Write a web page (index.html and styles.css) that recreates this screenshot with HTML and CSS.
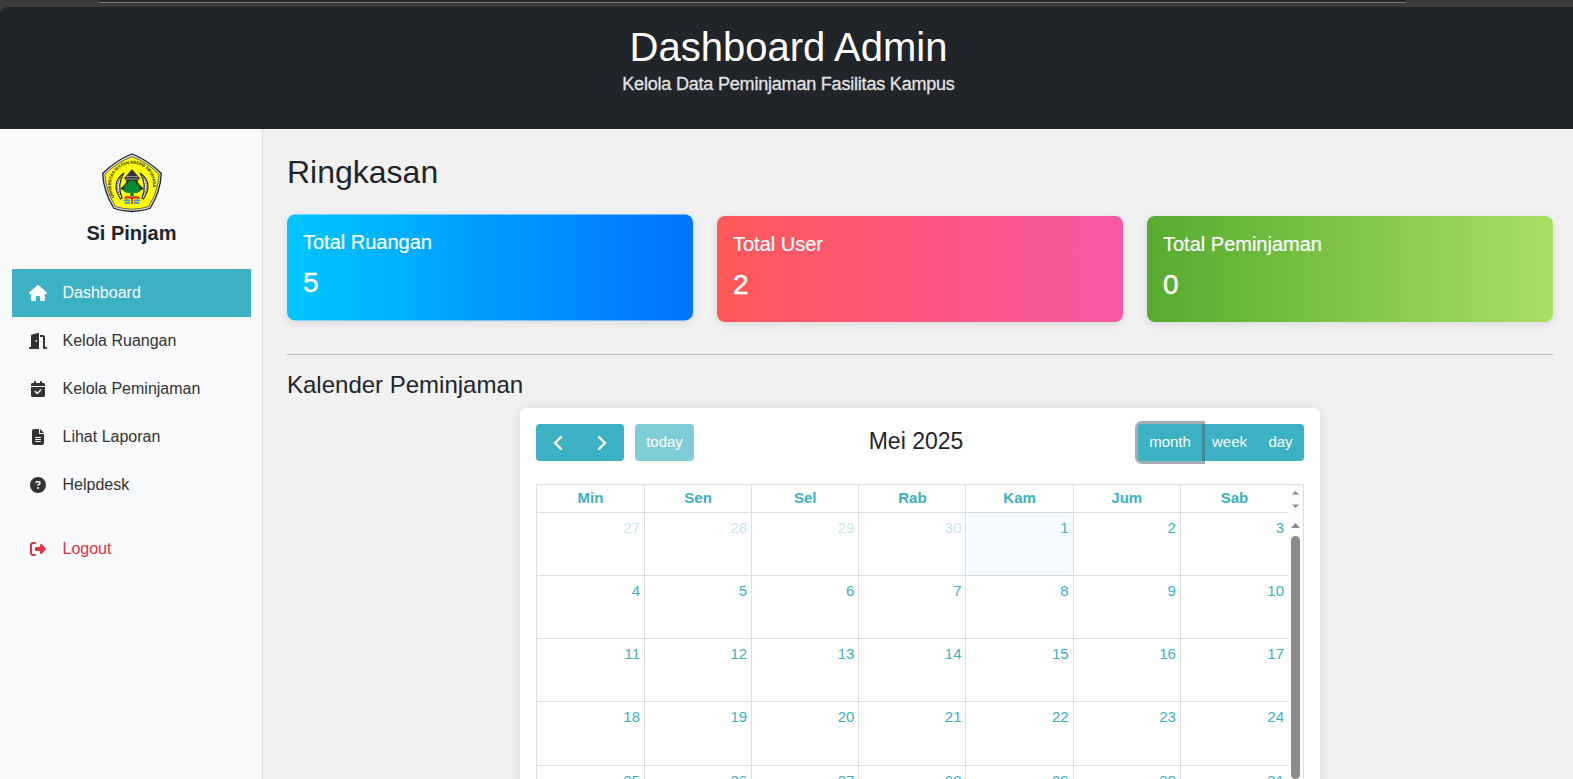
FILE: index.html
```html
<!DOCTYPE html>
<html lang="id">
<head>
<meta charset="utf-8">
<title>Dashboard Admin</title>
<link rel="stylesheet" href="styles.css">
</head>
<body>
<div class="chrome"><div class="address"></div></div>
<header class="header">
  <h1>Dashboard Admin</h1>
  <p>Kelola Data Peminjaman Fasilitas Kampus</p>
</header>
<div class="layout">
  <aside class="sidebar">
    <svg class="logo" viewBox="0 0 60 60">
      <path d="M30 1 Q46 7 59.300 20.500 Q58.500 39 48 55.500 Q30 61.500 12 55.500 Q1.500 39 .7 20.500 Q14 7 30 1Z" fill="#d8d8d8" stroke="#222" stroke-width="1.300"/>
      <path d="M30 3.800 Q45 9 57 21.500 Q56 38.500 46.500 53.500 Q30 58.800 13.500 53.500 Q4 38.500 3 21.500 Q15 9 30 3.800Z" fill="#ffff05" stroke="#333" stroke-width=".7"/>
      <path id="arc" d="M12.500 44 A21 21.500 0 1 1 47.500 44" fill="none"/>
      <text class="logo-text"><textPath href="#arc" textLength="81">UNIVERSITAS SULTAN AGENG TIRTAYASA</textPath></text>
      <path d="M22 20 Q8 30 18.500 46 L20 45 Q14.500 32 22 20ZM38 20 Q52 30 41.500 46 L40 45 Q45.500 32 38 20Z" fill="#e4e4e4" stroke="#222" stroke-width="1.100"/>
      <path d="M19 24 Q12.500 33 18 42M41 24 Q47.500 33 42 42" fill="none" stroke="#444" stroke-width=".8" stroke-dasharray="2 1"/>
      <path d="M30 16 L35 22 L38 25 L35.500 28 L37 31 L42 36 L37 38 H23 L18 36 L23 31 L24.500 28 L22 25 L25 22Z" fill="#333"/>
      <path d="M24 23.500H36M24 26H36" stroke="#aaa" stroke-width=".8"/>
      <path d="M30 27.500 Q34 27 34.500 31 Q38.500 32 37.500 35 Q40 38 36 39.500 Q33.500 40.500 31.500 39.500 L32 43.500 H28 L28.500 39.500 Q26.500 40.500 24 39.500 Q20 38 22.500 35 Q21.500 32 25.500 31 Q26 27 30 27.500Z" fill="#078a34"/>
      <path d="M22.500 45 Q26 43.500 30 45 Q34 43.500 37.500 45" fill="none" stroke="#e3231b" stroke-width="2"/>
      <path d="M22 47.800 Q25 46.500 28 47.800M32 47.800 Q35 46.500 38 47.800M23 50.300 Q26 49 28 50.300M32 50.300 Q35 49 37 50.300" fill="none" stroke="#269ad0" stroke-width="1.600"/>
      <path d="M30 46V51" stroke="#e3231b" stroke-width="1.700"/>
    </svg>
    <div class="brand">Si Pinjam</div>
    <nav class="menu">
      <a class="item active"><svg class="icon" viewBox="0 0 576 512" width="18"><path d="M575.8 255.500c0 18-15 32.100-32 32.100h-32l.7 160.200c0 2.700-.2 5.400-.5 8.100V472c0 22.100-17.900 40-40 40H456c-1.100 0-2.200 0-3.300-.1c-1.400 .1-2.800 .1-4.200 .1H416 392c-22.100 0-40-17.900-40-40V448 384c0-17.700-14.300-32-32-32H256c-17.700 0-32 14.300-32 32v64 24c0 22.100-17.900 40-40 40H160 128.100c-1.500 0-3-.1-4.500-.2c-1.200 .1-2.400 .2-3.600 .2H104c-22.100 0-40-17.900-40-40V360c0-.9 0-1.900 .1-2.800V287.600H32c-18 0-32-14-32-32.100c0-9 3-17 10-24L266.400 8c7-7 15-8 22-8s15 2 21 7L564.800 231.500c8 7 12 15 11 24z"/></svg><span>Dashboard</span></a>
      <a class="item"><svg class="icon" viewBox="0 0 576 512" width="18"><path d="M320 32c0-9.900-4.500-19.200-12.300-25.200S289.800-1.400 280.200 1l-179.900 45C79 51.300 64 70.500 64 92.500V448H32c-17.700 0-32 14.300-32 32s14.300 32 32 32H96 288h32V480 32zM256 256c0 17.700-10.700 32-24 32s-24-14.300-24-32s10.700-32 24-32s24 14.300 24 32zm96-128h96V480c0 17.700 14.300 32 32 32h64c17.700 0 32-14.300 32-32s-14.300-32-32-32H512V128c0-35.300-28.700-64-64-64H352v64z"/></svg><span>Kelola Ruangan</span></a>
      <a class="item"><svg class="icon" viewBox="0 0 448 512" width="14"><path d="M128 0c17.700 0 32 14.300 32 32V64H288V32c0-17.700 14.300-32 32-32s32 14.300 32 32V64h48c26.500 0 48 21.500 48 48v48H0V112C0 85.500 21.500 64 48 64H96V32c0-17.700 14.300-32 32-32zM0 192H448V464c0 26.500-21.500 48-48 48H48c-26.500 0-48-21.500-48-48V192zM329 305c9.400-9.400 9.400-24.600 0-33.900s-24.600-9.400-33.900 0l-95 95-47-47c-9.400-9.400-24.600-9.400-33.900 0s-9.400 24.600 0 33.900l64 64c9.400 9.400 24.600 9.400 33.900 0L329 305z"/></svg><span>Kelola Peminjaman</span></a>
      <a class="item"><svg class="icon" viewBox="0 0 384 512" width="12"><path d="M64 0C28.700 0 0 28.700 0 64V448c0 35.300 28.700 64 64 64H320c35.300 0 64-28.700 64-64V160H256c-17.700 0-32-14.300-32-32V0H64zM256 0V128H384L256 0zM112 256H272c8.800 0 16 7.200 16 16s-7.200 16-16 16H112c-8.800 0-16-7.200-16-16s7.200-16 16-16zm0 64H272c8.800 0 16 7.200 16 16s-7.200 16-16 16H112c-8.800 0-16-7.200-16-16s7.200-16 16-16zm0 64H272c8.800 0 16 7.200 16 16s-7.200 16-16 16H112c-8.800 0-16-7.200-16-16s7.200-16 16-16z"/></svg><span>Lihat Laporan</span></a>
      <a class="item"><svg class="icon" viewBox="0 0 512 512" width="16"><path d="M256 512A256 256 0 1 0 256 0a256 256 0 1 0 0 512zM169.800 165.300c7.900-22.300 29.100-37.300 52.800-37.300h58.300c34.900 0 63.100 28.300 63.100 63.100c0 22.600-12.100 43.500-31.700 54.800L280 264.400c-.2 13-10.900 23.600-24 23.600c-13.300 0-24-10.700-24-24V250.500c0-8.600 4.600-16.500 12.100-20.800l44.300-25.400c4.700-2.700 7.600-7.700 7.600-13.100c0-8.400-6.800-15.100-15.100-15.100H222.600c-3.400 0-6.400 2.100-7.500 5.300l-.4 1.200c-4.400 12.500-18.200 19-30.600 14.600s-19-18.200-14.600-30.600l.4-1.200zM224 352a32 32 0 1 1 64 0 32 32 0 1 1-64 0z"/></svg><span>Helpdesk</span></a>
      <a class="item logout"><svg class="icon" viewBox="0 0 512 512" width="16"><path d="M377.900 105.900L500.700 228.700c7.200 7.200 11.300 17.100 11.300 27.300s-4.100 20.100-11.300 27.300L377.900 406.100c-6.400 6.400-15 9.900-24 9.900c-18.700 0-33.900-15.200-33.900-33.900l0-62.100-128 0c-17.700 0-32-14.300-32-32l0-64c0-17.700 14.300-32 32-32l128 0 0-62.100c0-18.700 15.200-33.900 33.900-33.900c9 0 17.600 3.600 24 9.900zM160 96L96 96c-17.700 0-32 14.300-32 32l0 256c0 17.700 14.300 32 32 32l64 0c17.700 0 32 14.300 32 32s-14.300 32-32 32l-64 0c-53 0-96-43-96-96L0 128C0 75 43 32 96 32l64 0c17.700 0 32 14.300 32 32s-14.300 32-32 32z"/></svg><span>Logout</span></a>
    </nav>
  </aside>
  <main class="main">
    <h2>Ringkasan</h2>
    <section class="cards">
      <div class="card blue"><h5>Total Ruangan</h5><div class="value">5</div></div>
      <div class="card pink"><h5>Total User</h5><div class="value">2</div></div>
      <div class="card green"><h5>Total Peminjaman</h5><div class="value">0</div></div>
    </section>
    <hr class="rule">
    <h4>Kalender Peminjaman</h4>
    <section class="calendar">
      <div class="toolbar">
        <div class="tools">
          <div class="group">
            <button class="btn arrow"><svg width="10" height="14" viewBox="0 0 10 14"><path d="M8 1.200 2 7l6 5.800"/></svg></button>
            <button class="btn arrow"><svg width="10" height="14" viewBox="0 0 10 14"><path d="M2 1.200 8 7l-6 5.800"/></svg></button>
          </div>
          <button class="btn today-btn">today</button>
        </div>
        <div class="month-title">Mei 2025</div>
        <div class="group views">
          <button class="btn month">month</button>
          <button class="btn week">week</button>
          <button class="btn day-btn">day</button>
        </div>
      </div>
      <div class="table">
        <div class="grid">
          <div class="th">Min</div><div class="th">Sen</div><div class="th">Sel</div><div class="th">Rab</div><div class="th">Kam</div><div class="th">Jum</div><div class="th">Sab</div>
          <div class="td out">27</div><div class="td out">28</div><div class="td out">29</div><div class="td out">30</div><div class="td now">1</div><div class="td">2</div><div class="td">3</div>
          <div class="td">4</div><div class="td">5</div><div class="td">6</div><div class="td">7</div><div class="td">8</div><div class="td">9</div><div class="td">10</div>
          <div class="td">11</div><div class="td">12</div><div class="td">13</div><div class="td">14</div><div class="td">15</div><div class="td">16</div><div class="td">17</div>
          <div class="td">18</div><div class="td">19</div><div class="td">20</div><div class="td">21</div><div class="td">22</div><div class="td">23</div><div class="td">24</div>
          <div class="td">25</div><div class="td">26</div><div class="td">27</div><div class="td">28</div><div class="td">29</div><div class="td">30</div><div class="td">31</div>
        </div>
        <div class="scroll">
          <div class="stepper">
            <svg width="7" height="4" viewBox="0 0 7 4"><path d="M0 3.500 3.500 0 7 3.500z"/></svg>
            <svg width="7" height="4" viewBox="0 0 7 4"><path d="M0 .5 3.500 4 7 .5z"/></svg>
          </div>
          <svg class="up" width="9" height="5" viewBox="0 0 9 5"><path d="M0 5 4.500 0 9 5z"/></svg>
          <div class="thumb"></div>
        </div>
      </div>
    </section>
  </main>
</div>
</body>
</html>
```

FILE: styles.css
```css
* { box-sizing: border-box; }
body {
  margin: 0;
  height: 779px;
  overflow: hidden;
  display: flex;
  flex-direction: column;
  background: #3b3b3b;
  color: #212529;
  font: 16px/24px "Liberation Sans", Arial, sans-serif;
}
h1, h2, h4, h5, p { margin: 0; font-weight: 400; }

.chrome { height: 7px; flex: none; padding: 0 166px 0 98px; }
.address {
  height: 3px;
  background: #282828;
  border: solid #777;
  border-width: 0 0 1px;
  border-radius: 0 0 12px 12px;
}
.header {
  height: 122px;
  flex: none;
  padding: 16px 0 0 4px;
  background: #212529;
  border-radius: 8px 0 0;
  color: #fff;
  text-align: center;
}
.header h1 { font-size: 40px; line-height: 48px; }
.header p { margin-top: 1px; font-size: 18px; line-height: 24px; opacity: .87; letter-spacing: -.2px; -webkit-text-stroke: .3px; }

.layout { display: flex; flex: 1; min-height: 0; }
.sidebar {
  width: 263px;
  flex: none;
  padding: 24px 11px 0 12px;
  background: #f8f9fb;
  border-right: 1px solid #dee0e3;
}
.logo { display: block; width: 60px; height: 60px; margin: 0 auto; }
.logo-text { font-size: 4.2px; font-weight: 700; fill: #222; }
.brand { margin-top: 8px; text-align: center; font-size: 20px; font-weight: 700; }
.menu { margin-top: 24px; }
.item {
  display: grid;
  grid-template-columns: 20px 1fr;
  align-items: center;
  gap: 14.5px;
  height: 48px;
  padding-left: 16px;
  color: #333;
}
.icon { height: 16px; margin: 0 auto 1px; fill: currentColor; }
.item.active { background: #3bb1c3; color: #fff; }
.item.logout { margin-top: 16px; color: #dc3545; }

.main { flex: 1; padding: 24px 20px 0 24px; background: #f1f1f1; }
.main h2 { font-size: 32px; line-height: 38px; }
.cards { display: grid; grid-template-columns: repeat(3, 1fr); gap: 24px; margin-top: 25px; }
.card {
  height: 106px;
  padding: 16px;
  border-radius: 8px;
  box-shadow: 0 2px 8px rgba(0, 0, 0, .1);
  color: #fff;
}
.card h5 { font-size: 20px; line-height: 24px; -webkit-text-stroke: .2px; }
.card .value { margin-top: 12px; font-size: 28px; line-height: 34px; -webkit-text-stroke: .4px; }
.blue { background: linear-gradient(90deg, #00c6ff, #0072ff); transform: translateY(-1.600px); }
.pink { background: linear-gradient(90deg, #ff5858, #f857a6); }
.green { background: linear-gradient(90deg, #56ab2f, #a8e063); }
.rule { margin: 32px 0 15px; border: 0; border-top: 1px solid #bcbdbe; }
.main h4 { font-size: 24px; line-height: 29px; }

.calendar {
  width: 800px;
  height: 500px;
  margin: 9px auto 0;
  padding: 16px;
  background: #fff;
  border-radius: 6px;
  box-shadow: 0 0 10px rgba(0, 0, 0, .1);
  font-size: 15px;
}
.toolbar { display: flex; justify-content: space-between; align-items: center; height: 37px; }
.tools { display: flex; gap: 11px; }
.group { display: flex; }
.btn {
  height: 37px;
  padding: 0 0 2px;
  border: 0;
  background: #3bb1c3;
  color: #fff;
  font: 15px/22px "Liberation Sans", Arial, sans-serif;
}
.arrow { width: 44px; padding: 0; }
.arrow svg { display: block; margin: 0 auto; fill: none; stroke: #fff; stroke-width: 2.4; stroke-linecap: round; }
.group .btn:first-child { border-radius: 4px 0 0 4px; }
.group .btn:last-child { border-radius: 0 4px 4px 0; }
.today-btn { width: 59px; border-radius: 4px; background: #7fcdd7; }
.month { position: relative; width: 64px; box-shadow: 0 0 0 3px rgba(76, 91, 106, .5); }
.week { width: 55px; }
.day-btn { width: 47px; }
.month-title { padding-bottom: 2px; font-size: 23px; line-height: 27px; }

.table { display: flex; width: 768px; height: 440px; margin-top: 23px; border: 1px solid #ddd; }
.grid {
  flex: 1;
  display: grid;
  grid-template-columns: 108px repeat(6, 1fr);
  grid-template-rows: 28px 63px 63px 63px 64px 63px;
}
.th, .td { border-bottom: 1px solid #ddd; border-right: 1px solid #ddd; color: #3bb1c3; }
.th { padding-top: 2px; text-align: center; font-weight: 700; line-height: 22px; }
.td { padding: 4px 4px 0 0; text-align: right; line-height: 22px; }
.th:nth-child(7n), .td:nth-child(7n) { border-right: 0; }
.out { color: #c4e8ed; }
.now { background: #f4fafd; }
.scroll {
  width: 15px;
  display: flex;
  flex-direction: column;
  align-items: center;
  background: #fcfcfc;
  fill: #8b8b8b;
}
.stepper { height: 28px; padding-top: 6px; display: flex; flex-direction: column; gap: 9px; }
.stepper svg, .up { display: block; }
.up { margin-top: 10px; }
.thumb { width: 9px; height: 243px; margin-top: 8px; background: #8b8b8b; border-radius: 5px; }
```
